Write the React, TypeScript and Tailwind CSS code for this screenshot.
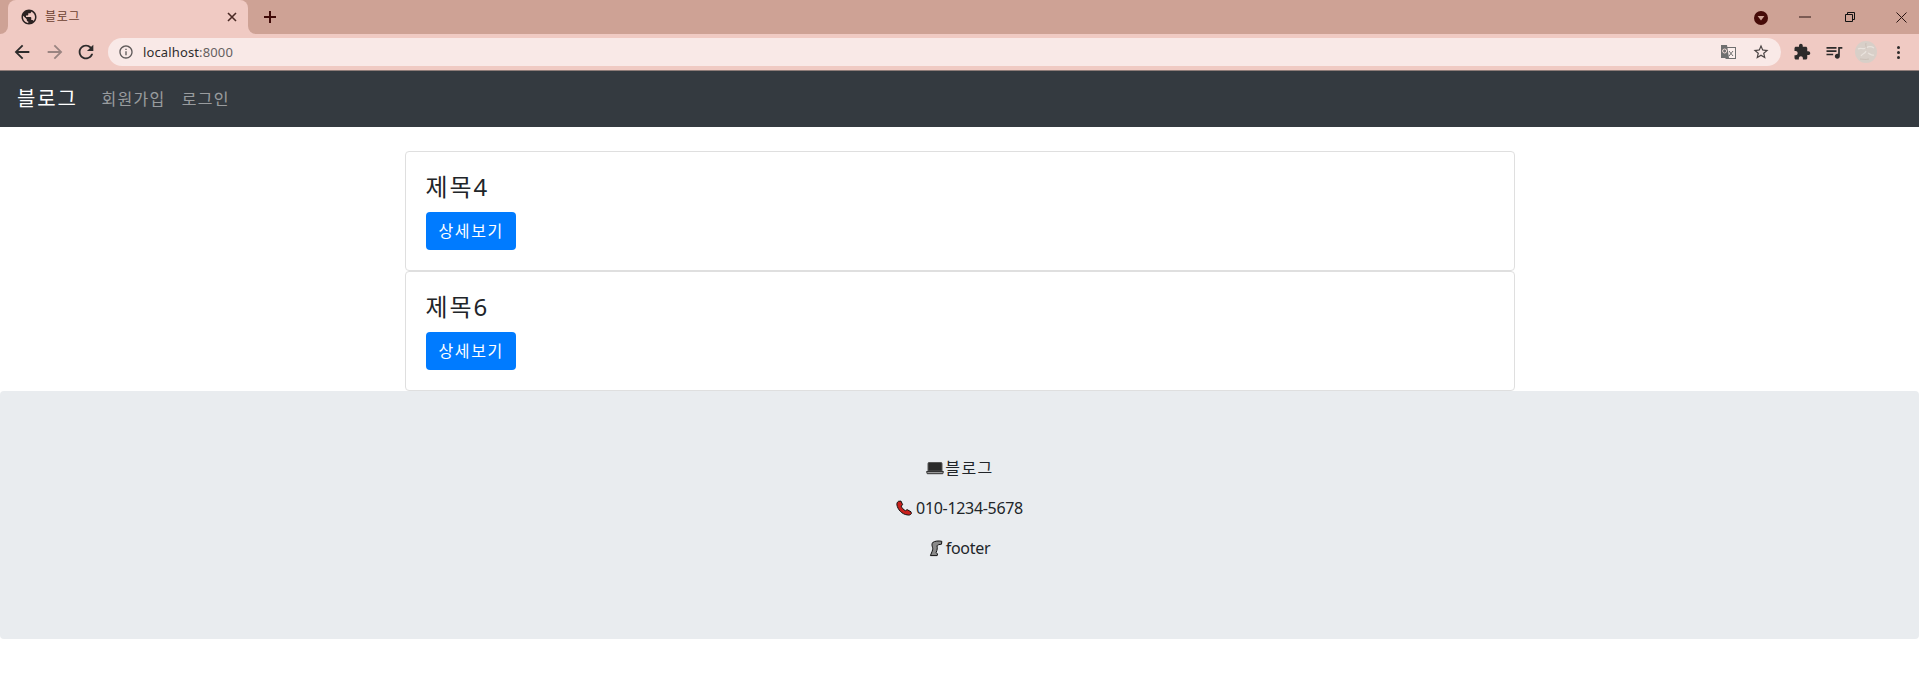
import React from 'react';

const Icon = ({ d, className, size = 24 }: { d: string; className?: string; size?: number }) => (
  <svg width={size} height={size} viewBox="0 0 24 24" fill="currentColor" className={className}>
    <path d={d} />
  </svg>
);

const icons = {
  globe: 'M12 2C6.48 2 2 6.48 2 12s4.48 10 10 10 10-4.48 10-10S17.52 2 12 2zm-1 17.93c-3.95-.49-7-3.85-7-7.93 0-.62.08-1.21.21-1.79L9 15v1c0 1.1.9 2 2 2v1.93zm6.9-2.54c-.26-.81-1-1.39-1.9-1.39h-1v-3c0-.55-.45-1-1-1H8v-2h2c.55 0 1-.45 1-1V7h2c1.1 0 2-.9 2-2v-.41c2.93 1.19 5 4.06 5 7.41 0 2.08-.8 3.97-2.1 5.39z',
  back: 'M20 11H7.83l5.59-5.59L12 4l-8 8 8 8 1.41-1.41L7.83 13H20v-2z',
  forward: 'M12 4l-1.41 1.41L16.17 11H4v2h12.17l-5.58 5.59L12 20l8-8z',
  reload: 'M17.65 6.35C16.2 4.9 14.21 4 12 4c-4.42 0-7.99 3.58-7.99 8s3.57 8 7.99 8c3.73 0 6.84-2.55 7.73-6h-2.08c-.82 2.33-3.04 4-5.65 4-3.31 0-6-2.69-6-6s2.69-6 6-6c1.66 0 3.14.69 4.22 1.78L13 11h7V4l-2.35 2.35z',
  info: 'M11 7h2v2h-2zm0 4h2v6h-2zm1-9C6.48 2 2 6.48 2 12s4.48 10 10 10 10-4.48 10-10S17.52 2 12 2zm0 18c-4.41 0-8-3.59-8-8s3.59-8 8-8 8 3.59 8 8-3.59 8-8 8z',
  star: 'M22 9.24l-7.19-.62L12 2 9.19 8.63 2 9.24l5.46 4.73L5.82 21 12 17.27 18.18 21l-1.63-7.03L22 9.24zM12 15.4l-3.76 2.27 1-4.28-3.32-2.88 4.38-.38L12 6.1l1.71 4.04 4.38.38-3.32 2.88 1 4.28L12 15.4z',
  puzzle: 'M20.5 11H19V7c0-1.1-.9-2-2-2h-4V3.5C13 2.12 11.88 1 10.5 1S8 2.12 8 3.5V5H4c-1.1 0-1.99.9-1.99 2v3.8H3.5c1.49 0 2.7 1.21 2.7 2.7s-1.21 2.7-2.7 2.7H2V20c0 1.1.9 2 2 2h3.8v-1.5c0-1.49 1.21-2.7 2.7-2.7 1.49 0 2.7 1.21 2.7 2.7V22H17c1.1 0 2-.9 2-2v-4h1.5c1.38 0 2.5-1.12 2.5-2.5S21.88 11 20.5 11z',
  queue: 'M15 6H3v2h12V6zm0 4H3v2h12v-2zM3 16h8v-2H3v2zM17 6v8.18c-.31-.11-.65-.18-1-.18-1.66 0-3 1.34-3 3s1.34 3 3 3 3-1.34 3-3V8h3V6h-5z',
};

const Translate = () => (
  <svg width="16" height="16" viewBox="0 0 16 16">
    <rect x="6" y="3.5" width="9.5" height="11" fill="#fbeeec" stroke="#6f6f6f" />
    <path d="M9 7l4 5M13 7l-4 5" stroke="#6f6f6f" strokeWidth="1" fill="none" />
    <path d="M1 1h6l2 13H1z" fill="#6f6f6f" />
    <circle cx="4.6" cy="7" r="2" fill="none" stroke="#f4dcd8" strokeWidth="1" />
  </svg>
);

const Avatar = () => (
  <svg width="22" height="22" viewBox="0 0 22 22" className="ml-[11px] shrink-0">
    <circle cx="11" cy="11" r="11" fill="#d8cfc8" />
    <path d="M3 8c3-2 5 1 8-1s5-2 8 0M6 15c2-3 4-2 5-5M13 12c2 1 4 3 6 2" stroke="#e9e3dd" strokeWidth="1.2" fill="none" />
    <path d="M11 2c-1 3 1 4 0 6M5 18c3 0 5 1 9 0" stroke="#c6bbb2" strokeWidth=".8" fill="none" />
  </svg>
);

const Laptop = () => (
  <svg width="20" height="16" viewBox="0 0 18 16" className="shrink-0">
    <path d="M3 2.5h12a1 1 0 0 1 1 1V11H2V3.5a1 1 0 0 1 1-1z" fill="#2a2a2a" stroke="#555" />
    <path d="M.6 11.5h16.8l-.6 2.2H1.2z" fill="#9a9a9a" stroke="#333" strokeWidth="1" />
  </svg>
);

const Phone = () => (
  <svg width="20" height="17" viewBox="0 0 20 16" className="shrink-0">
    <path d="M2.5.8 5 .6l1.6 3.6-1.4 1.4c.8 2 2.2 3.6 4.3 4.6l1.6-1.1 3.9 2.2.4 1.8c-.8 1.4-2.6 1.8-4.2 1.3C6 13.8 1.6 9 .9 4.3.7 2.9 1.3 1.5 2.5.8z" fill="#c8201c" stroke="#111" strokeWidth="1" />
  </svg>
);

const Leg = () => (
  <svg width="17" height="17" viewBox="0 0 17 17" className="shrink-0">
    <path d="M3.6 2.6C5.6 1 9.5.6 12.8 1.3l-.3 2.9c-2 .2-4 .6-4.5 1.6.5 2 .3 4.2-.9 6.6l1.4 1.6-.3 1.6H1.4l1.8-4.4c.9-2 .5-3.5 0-5-.4-1.2-.3-2.4.4-3.6z" fill="#8a8a8a" stroke="#111" strokeWidth="1" />
  </svg>
);

const posts = ['4', '6'];

export default function App() {
  return (
    <div className="min-h-[696px] bg-white font-['Noto_Sans','Noto_Sans_CJK_KR',sans-serif] text-[#212529]">
      {/* browser tab strip */}
      <div className="h-[34px] bg-[#cea295] flex items-end pl-2">
        <div className="relative w-[240px] h-[34px] bg-[#f0cac3] rounded-t-lg flex items-center pl-[12px] pr-[11px]">
          <div className="absolute left-[-8px] bottom-0 w-2 h-2 bg-[#f0cac3]">
            <div className="w-2 h-2 bg-[#cea295] rounded-br-lg" />
          </div>
          <div className="absolute right-[-8px] bottom-0 w-2 h-2 bg-[#f0cac3]">
            <div className="w-2 h-2 bg-[#cea295] rounded-bl-lg" />
          </div>
          <Icon d={icons.globe} size={18} className="text-[#2b2222] shrink-0" />
          <span className="ml-[7px] text-xs tracking-[0.06em] text-[#6b4030] flex-1">블로그</span>
          <svg width="10" height="10" viewBox="0 0 10 10" className="text-[#4a2a25]">
            <path d="M1 1l8 8M9 1l-8 8" stroke="currentColor" strokeWidth="1.6" />
          </svg>
        </div>
        <div className="ml-[16px] h-[34px] flex items-center">
          <svg width="12" height="12" viewBox="0 0 12 12">
            <path d="M6 0v12M0 6h12" stroke="#3f0a08" strokeWidth="2" />
          </svg>
        </div>
        <div className="ml-auto h-[34px] flex items-center pr-[12px]">
          <svg width="14" height="14" viewBox="0 0 14 14" className="mt-[2px]">
            <circle cx="7" cy="7" r="7" fill="#460b08" />
            <path d="M3.6 5h6.8L7 9.6z" fill="#cea295" />
          </svg>
          <svg width="12" height="2" viewBox="0 0 12 2" className="ml-[31px] mb-[1px]">
            <path d="M0 1h12" stroke="#2a1512" strokeWidth="1" />
          </svg>
          <svg width="10" height="10" viewBox="0 0 10 10" className="ml-[34px]">
            <path d="M.5 2.5h7v7h-7zM2.5 2.5V.5h7v7h-2" stroke="#111" fill="none" strokeWidth="1" />
          </svg>
          <svg width="11" height="11" viewBox="0 0 11 11" className="ml-[41px]">
            <path d="M.5.5l10 10M10.5.5l-10 10" stroke="#2a1512" strokeWidth="1" />
          </svg>
        </div>
      </div>

      {/* browser toolbar */}
      <div className="h-[36px] bg-[#f0cac3] flex items-center pl-[11px] pr-[19px] text-[#2d2b2b]">
        <Icon d={icons.back} size={22} />
        <Icon d={icons.forward} size={22} className="ml-[11px] text-[#9a8481]" />
        <Icon d={icons.reload} size={22} className="ml-[9px]" />
        <div className="ml-[11px] h-7 flex-1 rounded-full bg-[#f9e9e7] flex items-center pl-[10px] pr-[11px]">
          <Icon d={icons.info} size={16} className="text-[#5f5a5a]" />
          <span className="ml-[9px] mt-px text-[13px] tracking-[0.01em] text-[#2f2d2d]">
            localhost<span className="text-[#65605f]">:8000</span>
          </span>
          <div className="ml-auto flex items-center">
            <Translate />
            <Icon d={icons.star} size={18} className="ml-[16px] text-[#4a4444]" />
          </div>
        </div>
        <Icon d={icons.puzzle} size={18} className="ml-[12px]" />
        <Icon d={icons.queue} size={20} className="ml-[13px]" />
        <Avatar />
        <div className="ml-[20px] flex flex-col gap-[2px]">
          <div className="w-[3px] h-[3px] rounded-full bg-[#2d2b2b]" />
          <div className="w-[3px] h-[3px] rounded-full bg-[#2d2b2b]" />
          <div className="w-[3px] h-[3px] rounded-full bg-[#2d2b2b]" />
        </div>
      </div>
      <div className="h-px bg-[#8e7c78]" />

      {/* navbar */}
      <nav className="h-14 bg-[#343a40] flex items-center pl-[17px] pr-4">
        <a className="text-xl tracking-[0.09em] text-white mr-4">블로그</a>
        <a className="px-2 text-base tracking-[0.08em] text-[#ffffff80]">회원가입</a>
        <a className="px-2 text-base tracking-[0.08em] text-[#ffffff80]">로그인</a>
      </nav>

      {/* posts */}
      <div className="w-[1110px] mx-auto pt-6">
        {posts.map((n) => (
          <div key={n} className="h-[120px] border border-[#dfdfdf] rounded p-5">
            <h4 className="text-2xl leading-[30px] mb-[10px]"><span className="tracking-[0.08em]">제목</span>{n}</h4>
            <button className="h-[38px] pl-[13px] pr-3 bg-[#007bff] text-white text-base tracking-[0.1em] rounded">상세보기</button>
          </div>
        ))}
      </div>

      {/* footer */}
      <div className="h-[248px] bg-[#e9ecef] rounded pt-[65px] flex flex-col items-center text-base leading-6">
        <p className="mb-4 flex items-center"><Laptop /><span className="tracking-[0.09em]">블로그</span></p>
        <p className="mb-4 flex items-center tracking-[-0.02em]"><Phone />010-1234-5678</p>
        <p className="mb-4 flex items-center tracking-[-0.02em]"><Leg />footer</p>
      </div>
    </div>
  );
}
